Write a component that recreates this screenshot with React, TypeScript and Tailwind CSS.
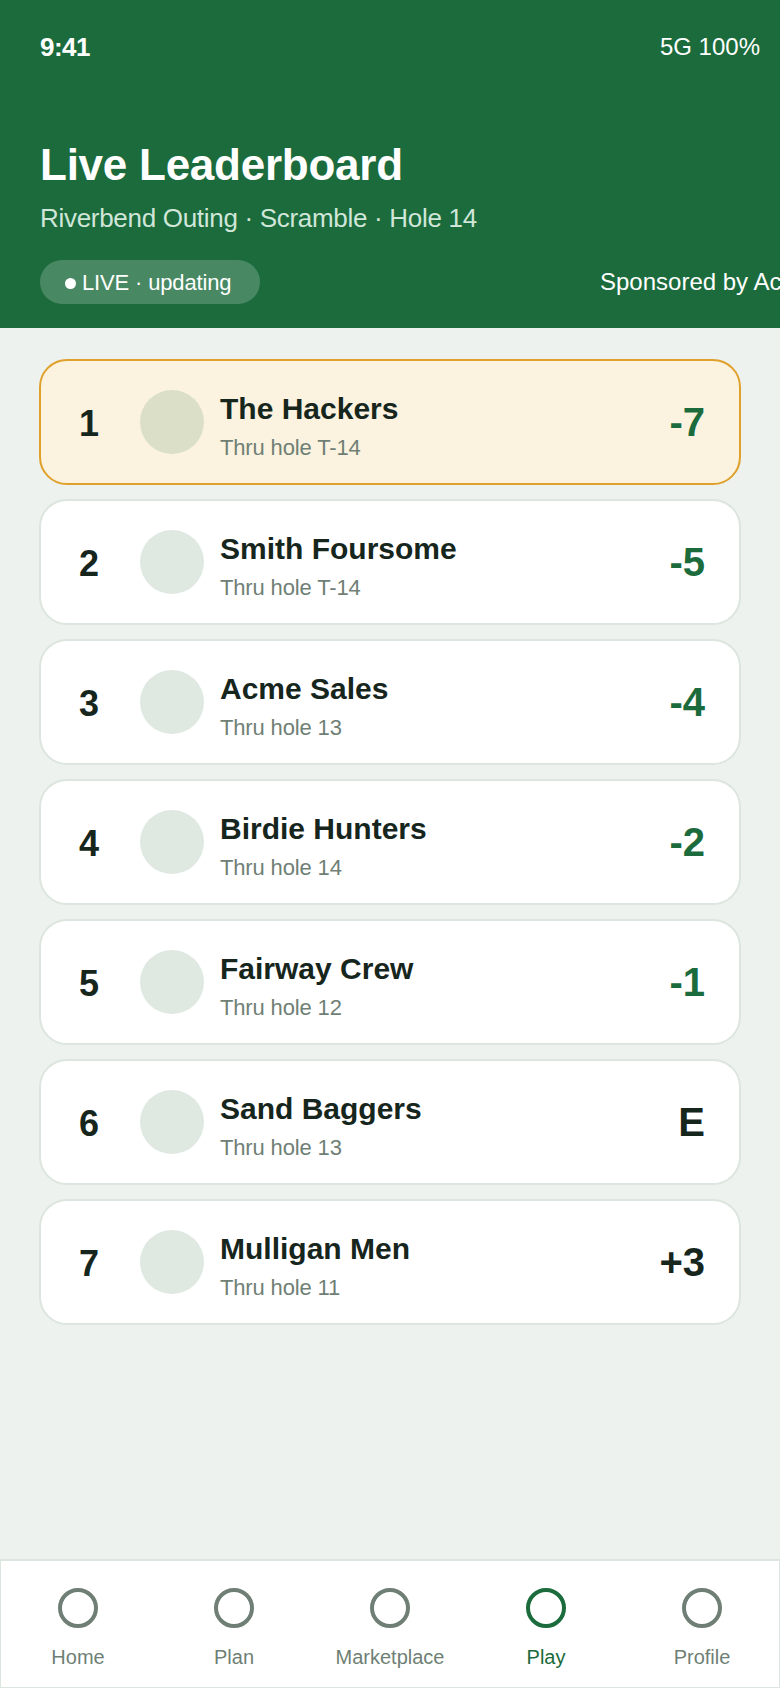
const teams = [
  { rank: 1, name: "The Hackers", thru: "Thru hole T-14", score: "-7", under: true, lead: true },
  { rank: 2, name: "Smith Foursome", thru: "Thru hole T-14", score: "-5", under: true },
  { rank: 3, name: "Acme Sales", thru: "Thru hole 13", score: "-4", under: true },
  { rank: 4, name: "Birdie Hunters", thru: "Thru hole 14", score: "-2", under: true },
  { rank: 5, name: "Fairway Crew", thru: "Thru hole 12", score: "-1", under: true },
  { rank: 6, name: "Sand Baggers", thru: "Thru hole 13", score: "E", under: false },
  { rank: 7, name: "Mulligan Men", thru: "Thru hole 11", score: "+3", under: false },
];
const tabs = ["Home", "Plan", "Marketplace", "Play", "Profile"];

export default function App() {
  return (
    <div className="w-[780px] h-[1688px] flex flex-col overflow-hidden bg-[#edf2ee] font-['Liberation_Sans',Arial,sans-serif] text-[#16261d]">
      <header className="h-[328px] shrink-0 bg-[#1b6b3c] text-white flex flex-col pl-10 overflow-hidden">
        <div className="flex justify-between items-center pt-[30px] h-[64px] pr-[20px] text-[26px] leading-[30px]">
          <span className="font-bold tracking-[-0.5px]">9:41</span>
          <span className="text-[24px]">5G 100%</span>
        </div>
        <h1 className="mt-[73px] text-[44px] leading-[56px] font-bold tracking-[-0.25px]">Live Leaderboard</h1>
        <p className="mt-[7px] text-[26px] leading-[36px] tracking-[-0.3px] text-[#cfe6d8]">Riverbend Outing · Scramble · Hole 14</p>
        <div className="mt-[24px] flex items-center whitespace-nowrap">
          <div className="h-[44px] w-[220px] shrink-0 rounded-full bg-white/20 flex items-center pl-[25px] text-[22px] tracking-[-0.15px]">
            <span className="w-[11px] h-[11px] mt-[2px] mr-[6px] rounded-full bg-white" />
            LIVE · updating
          </div>
          <span className="ml-[340px] text-[24px]">Sponsored by Acme Sales</span>
        </div>
      </header>

      <main className="flex-1 flex flex-col gap-[14px] pt-[31px] px-[39px]">
        {teams.map((t) => (
          <div
            key={t.rank}
            className={`h-[126px] rounded-[28px] border-2 flex items-center pl-[28px] pr-[34px] ${
              t.lead ? "bg-[#fbf3df] border-[#e0a02c]" : "bg-white border-[#dde5df]"
            }`}
          >
            <div className="w-[40px] pt-[3px] text-center text-[36px] font-bold">{t.rank}</div>
            <div className={`ml-[31px] w-[64px] h-[64px] rounded-full shrink-0 ${t.lead ? "bg-[#dbdfc7]" : "bg-[#dfe9e2]"}`} />
            <div className="ml-[16px] flex-1 pt-[9px]">
              <div className="text-[30px] leading-[36px] font-bold">{t.name}</div>
              <div className="mt-[7px] text-[22px] leading-[28px] tracking-[-0.15px] text-[#6f7f75]">{t.thru}</div>
            </div>
            <div className={`text-[40px] font-bold ${t.under ? "text-[#1b6b3c]" : "text-[#16261d]"}`}>{t.score}</div>
          </div>
        ))}
      </main>

      <nav className="h-[129px] shrink-0 bg-white border-x border-b border-t-2 border-[#dde5df]">
        <div className="flex -mx-px">
          {tabs.map((t) => {
            const on = t === "Play";
            return (
              <div key={t} className={`flex-1 flex flex-col items-center pt-[27px] ${on ? "text-[#1b6b3c]" : "text-[#6f7f75]"}`}>
                <div className={`w-[40px] h-[40px] rounded-full border-[4px] ${on ? "border-[#1b6b3c]" : "border-[#6f7f75]"}`} />
                <div className="mt-[15px] text-[20px] leading-[28px]">{t}</div>
              </div>
            );
          })}
        </div>
      </nav>
    </div>
  );
}
